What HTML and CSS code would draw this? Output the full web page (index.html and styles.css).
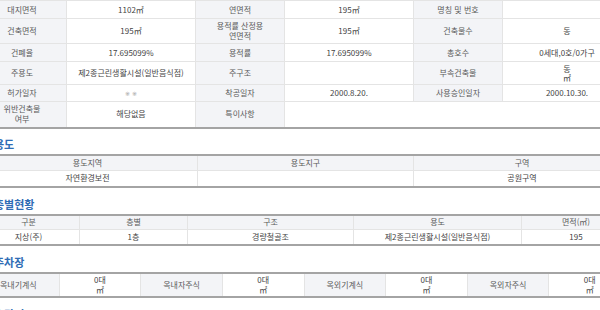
FILE: index.html
```html
<!DOCTYPE html>
<html lang="ko">
<head>
<meta charset="utf-8">
<title>건축물대장</title>
<link rel="stylesheet" href="styles.css">
</head>
<body>
<div class="page">
  <table class="grid main">
    <colgroup><col class="c-lab"><col class="c-val"><col class="c-lab"><col class="c-val"><col class="c-lab"><col class="c-val"></colgroup>
    <tr class="r1"><th>대지면적</th><td>1102㎡</td><th>연면적</th><td>195㎡</td><th>명칭 및 번호</th><td></td></tr>
    <tr class="r2"><th>건축면적</th><td>195㎡</td><th>용적률 산정용<br>연면적</th><td>195㎡</td><th>건축물수</th><td>동</td></tr>
    <tr class="r3"><th>건폐율</th><td>17.695099%</td><th>용적률</th><td>17.695099%</td><th>총호수</th><td>0세대,0호/0가구</td></tr>
    <tr class="r4"><th>주용도</th><td>제2종근린생활시설(일반음식점)</td><th>주구조</th><td></td><th>부속건축물</th><td class="stack">동<br>㎡</td></tr>
    <tr class="r5"><th>허가일자</th><td><span class="mark">※ ※</span></td><th>착공일자</th><td>2000.8.20.</td><th>사용승인일자</th><td>2000.10.30.</td></tr>
    <tr class="r6"><th>위반건축물<br>여부</th><td>해당없음</td><th>특이사항</th><td colspan="3"></td></tr>
  </table>

  <h2 class="sec-title first">용도</h2>
  <table class="grid">
    <colgroup><col class="w3a"><col class="w3b"><col></colgroup>
    <tr class="h16"><th>용도지역</th><th>용도지구</th><th>구역</th></tr>
    <tr class="h16"><td>자연환경보전</td><td></td><td>공원구역</td></tr>
  </table>

  <h2 class="sec-title">층별현황</h2>
  <table class="grid">
    <colgroup><col class="f1"><col class="f2"><col class="f3"><col class="f4"><col></colgroup>
    <tr class="h15"><th>구분</th><th>층별</th><th>구조</th><th>용도</th><th>면적(㎡)</th></tr>
    <tr class="h15"><td>지상(주)</td><td>1층</td><td>경량철골조</td><td>제2종근린생활시설(일반음식점)</td><td>195</td></tr>
  </table>

  <h2 class="sec-title">주차장</h2>
  <table class="grid park">
    <tr class="h24"><th>옥내기계식</th><td class="stack">0대<br>㎡</td><th>옥내자주식</th><td class="stack">0대<br>㎡</td><th>옥외기계식</th><td class="stack">0대<br>㎡</td><th>옥외자주식</th><td class="stack">0대<br>㎡</td></tr>
  </table>

  <h2 class="sec-title">승강기</h2>
</div>
</body>
</html>
```

FILE: styles.css
```css
* { box-sizing: border-box; }
html, body { margin: 0; padding: 0; background: #fff; }
body {
  font-family: "Noto Sans CJK KR", "Noto Sans", sans-serif;
  color: #444;
  overflow: hidden;
}
.page {
  width: 654px;
  margin-left: -23px;
}
table {
  width: 100%;
  border-collapse: collapse;
  table-layout: fixed;
}
.grid {
  border-top: 2px solid #a4a4a4;
  border-bottom: 2px solid #a4a4a4;
}
.main { border-top: 1px solid #e3e3e3; }
th, td {
  font-size: 8px;
  font-weight: normal;
  line-height: 10px;
  padding: 0 4px;
  text-align: center;
  border: 1px solid #e4e4e4;
  color: #444;
}
th { background: #f3f4f7; color: #5a5a5a; }
.c-lab { width: 89px; }
.c-val { width: 129px; }
.main .r1 { height: 18px; }
.main .r2 { height: 25px; }
.main .r3 { height: 18px; }
.main .r4 { height: 23px; }
.main .r5 { height: 17px; }
.main .r6 { height: 26px; }
.h15 { height: 15px; }
.h16 { height: 16px; }
.h24 { height: 24px; }
.stack { line-height: 10px; }
.main .stack { line-height: 9px; }
.mark {
  font-family: "DejaVu Sans", sans-serif;
  color: #a0a0a0;
  font-size: 6px;
}
.w3a { width: 220px; }
.w3b { width: 216px; }
.f1 { width: 102px; }
.f2 { width: 108px; }
.f3 { width: 166px; }
.f4 { width: 168px; }
.sec-title {
  margin: 8px 0 2px 17px;
  font-size: 11px;
  line-height: 16px;
  font-weight: bold;
  color: #2f6db5;
}
.sec-title.first { margin-top: 7px; }
```
